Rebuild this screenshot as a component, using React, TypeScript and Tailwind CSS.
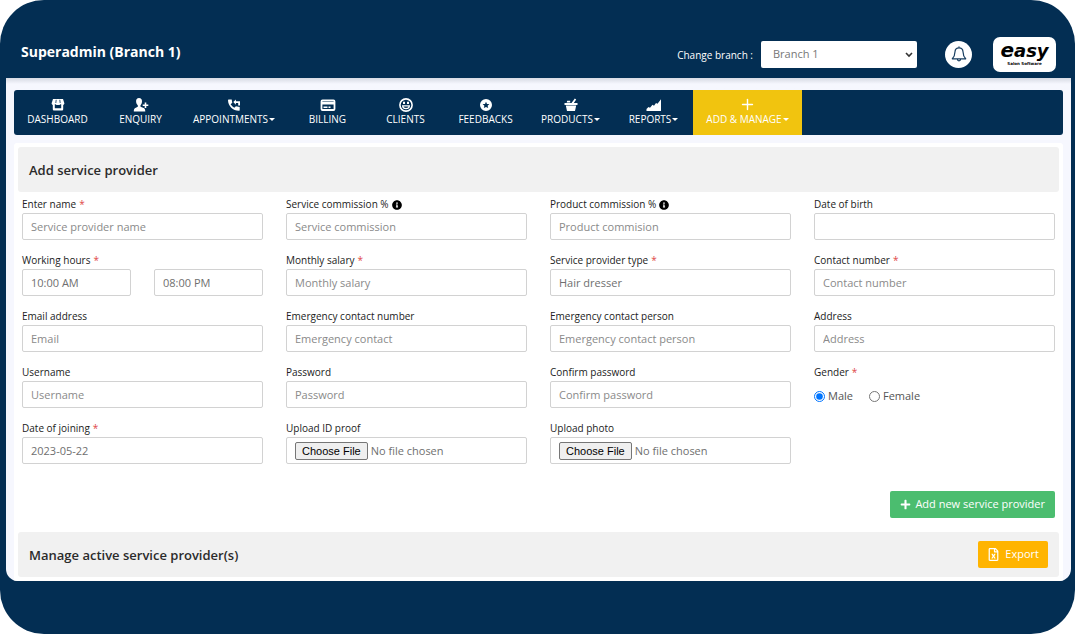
import type { ReactNode } from "react";
import { FaInfoCircle, FaPlus, FaRegFileExcel } from "react-icons/fa";
import { LuPlus } from "react-icons/lu";

type MenuEntry = { label: string; icon: ReactNode; menu?: boolean; active?: boolean; size: string };

const svgClass = "h-[14px] w-[16px]";

const StoreIcon = () => (
  <svg viewBox="0 0 16 14" className={svgClass} fill="currentColor" aria-hidden="true">
    <path d="M3 1h10l1.400 4.200c0 1.100-.8 1.900-1.900 1.900-.9 0-1.700-.5-2-1.200-.5.800-1.400 1.200-2.500 1.200s-2-.4-2.500-1.200c-.3.700-1.100 1.200-2 1.200-1.100 0-1.900-.8-1.900-1.900z" />
    <path d="M2.800 7h2v3.200h6.400V7h2v4.200c0 .8-.6 1.400-1.400 1.400H4.200c-.8 0-1.400-.6-1.400-1.400z" />
    <path d="M6.200 1.800 5.800 5M9.800 1.800l.4 3.200" stroke="#032e53" strokeWidth=".8" />
  </svg>
);

const PersonPlusIcon = () => (
  <svg viewBox="0 0 16 14" className={svgClass} fill="currentColor" aria-hidden="true">
    <path d="M6 0c2 0 3.200 1.500 3 3.500-.1 1.800-.7 3-1.500 3.800v1.400l3.200 1.300c1.200.5 1.500 1.500 1.600 3.500H.8c0-2 .4-3 1.500-3.500l2.500-1.300V7.300C3.800 6.500 3.200 5.200 3.100 3.500 3 1.500 4 0 6 0z" />
    <path d="M11.700 4.500h1.600v2h2v1.600h-2v2h-1.600v-2h-2V6.500h2z" />
  </svg>
);

const PhoneIcon = () => (
  <svg viewBox="0 0 16 14" className={svgClass} fill="currentColor" aria-hidden="true">
    <path d="M2.500 1.500h3.200l.6 3.300-1.700 1.500a10 10 0 0 0 3.700 3.400l1.600-1.500 3.800.8v2.900c0 .5-.4.900-.9.900C7 12.800 2 8 2 2z" />
    <path d="M7.300 4.100 9.900 1.500v1.700H14v-1.700h-2.200V1.500H14v6h-1.800V5H9.900v1.700z" />
  </svg>
);

const CardIcon = () => (
  <svg viewBox="0 0 16 14" className={svgClass} aria-hidden="true">
    <rect x="1.500" y="2.500" width="13" height="9.500" rx="1" fill="none" stroke="currentColor" strokeWidth="1.800" />
    <path d="M1 4h14v2.500H1zM3.500 8.500h4V10h-4zM8.500 8.500h2V10h-2z" fill="currentColor" />
  </svg>
);

const SmileIcon = () => (
  <svg viewBox="0 0 16 14" className={svgClass} fill="none" stroke="currentColor" aria-hidden="true">
    <circle cx="8" cy="7" r="6.100" strokeWidth="1.600" />
    <path d="M4.600 7.900h6.800c-.2 1.700-1.500 2.800-3.400 2.800s-3.200-1.100-3.400-2.800z" strokeWidth="1.200" />
    <path d="M5 6h2V3.800H5zM9 6h2V3.800H9z" fill="currentColor" stroke="none" />
  </svg>
);

const StarBadgeIcon = () => (
  <svg viewBox="0 0 16 14" className={svgClass} fill="currentColor" aria-hidden="true">
    <path fillRule="evenodd" d="M8 1a6 6 0 1 1 0 12A6 6 0 0 1 8 1zm0 2.700-1 2.200-2.400.2 1.800 1.600-.6 2.400L8 8.900l2.200 1.200-.6-2.400 1.800-1.600L9 5.900z" />
  </svg>
);

const BasketIcon = () => (
  <svg viewBox="0 0 16 14" className={svgClass} fill="currentColor" aria-hidden="true">
    <path d="M1.500 5h7l3.300-4.500 1.400 1L10.800 5h3.700v2.100h-13zM2.800 7.600h10.400L12 13H4zM4.200 2.800h3V4.500H3.700z" />
  </svg>
);

const ChartIcon = () => (
  <svg viewBox="0 0 16 14" className={svgClass} fill="currentColor" aria-hidden="true">
    <path d="M.5 13V11l2-2 1.500.8 2.500-3 1.500 1L10 5l1.500.8L15 1.200V13z" />
  </svg>
);

const BellIcon = () => (
  <svg viewBox="0 0 16 16" className="size-[16px]" fill="none" stroke="currentColor" strokeWidth="1.200" strokeLinejoin="round" strokeLinecap="round" aria-hidden="true">
    <path d="M8 .8v1M8 1.800c2.300 0 3.900 1.600 4 4 .1 3.600.8 5.200 2.700 7H1.300c1.900-1.800 2.600-3.400 2.700-7 .1-2.400 1.700-4 4-4zM6.300 13c.1 1.200.7 1.900 1.700 1.900s1.600-.7 1.700-1.900" />
  </svg>
);

const Caret = () => (
  <svg viewBox="0 0 6 3" className="h-[3px] w-[6px]" fill="currentColor" aria-hidden="true">
    <path d="M0 0h6L3 3z" />
  </svg>
);

const entries: MenuEntry[] = [
  { label: "DASHBOARD", icon: <StoreIcon />, size: "w-[87px]" },
  { label: "ENQUIRY", icon: <PersonPlusIcon />, size: "w-[79px]" },
  { label: "APPOINTMENTS", icon: <PhoneIcon />, menu: true, size: "w-[108px]" },
  { label: "BILLING", icon: <CardIcon />, size: "w-[79px]" },
  { label: "CLIENTS", icon: <SmileIcon />, size: "w-[77px]" },
  { label: "FEEDBACKS", icon: <StarBadgeIcon />, size: "w-[83px]" },
  { label: "PRODUCTS", icon: <BasketIcon />, menu: true, size: "w-[87px]" },
  { label: "REPORTS", icon: <ChartIcon />, menu: true, size: "w-[79px]" },
  { label: "ADD & MANAGE", icon: <LuPlus className="size-[17px]" />, menu: true, active: true, size: "w-[109px]" },
];

const labelClass = "flex h-[17px] items-center gap-[3px] text-[10px] text-[#222222]";
const inputClass =
  "block h-[27px] w-full min-w-0 rounded-[2px] border border-[#d2d2d2] bg-white px-[8px] text-[11px] text-[#6f6f6f] placeholder:text-[#8a8a8a] outline-none";

function FieldLabel({ id, text, required, info }: { id: string; text: string; required?: boolean; info?: boolean }) {
  return (
    <label htmlFor={id} className={labelClass}>
      {text}
      {required && <span className="text-[#e04848]">*</span>}
      {info && <FaInfoCircle className="size-[10px] text-black" />}
    </label>
  );
}

type FieldProps = { id: string; text: string; hint?: string; value?: string; required?: boolean; info?: boolean; type?: string };

function Field({ id, text, hint, value, required, info, type = "text" }: FieldProps) {
  return (
    <div className="min-w-0">
      <FieldLabel id={id} text={text} required={required} info={info} />
      <input id={id} type={type} placeholder={hint} defaultValue={value} className={inputClass} />
    </div>
  );
}

function FileField({ id, text }: { id: string; text: string }) {
  return (
    <div className="min-w-0">
      <FieldLabel id={id} text={text} />
      <input
        id={id}
        type="file"
        className="block h-[27px] w-full rounded-[2px] border border-[#d2d2d2] px-[8px] pt-[4px] text-[11px] leading-[18px] text-[#6f6f6f] file:mr-[3px] file:h-[18px] file:rounded-[2px] file:border file:border-solid file:border-[#767676] file:bg-[#efefef] file:px-[6px] file:font-['Liberation_Sans',sans-serif] file:text-[11px] file:leading-[14px] file:text-black"
      />
    </div>
  );
}

export default function App() {
  return (
    <div className="min-h-screen rounded-[44px] bg-[#032e53] pr-[4px] pb-[53px] pl-[6px] font-['Open_Sans',sans-serif]">
      <header className="flex h-[78px] items-center pt-[30px] pr-[15px] pl-[15px] text-white">
        <h1 className="pb-[6px] text-[14px] font-bold">Superadmin (Branch 1)</h1>
        <div className="ml-auto flex items-center">
          <label htmlFor="branch" className="mr-[8px] pt-[3px] text-[10px] font-medium">Change branch :</label>
          <div className="relative">
            <select id="branch" className="block h-[27px] w-[156px] appearance-none rounded-[2px] bg-white px-[12px] text-[11px] text-[#777777]">
              <option>Branch 1</option>
            </select>
            <svg viewBox="0 0 8 6" className="pointer-events-none absolute top-[11px] right-[4px] h-[6px] w-[8px]" fill="none" stroke="#333333" strokeWidth="1.600" aria-hidden="true">
              <path d="M1 1l3 3 3-3" />
            </svg>
          </div>
          <button aria-label="Notifications" className="ml-[28px] flex size-[27px] items-center justify-center rounded-full bg-white text-[#173d5f]">
            <BellIcon />
          </button>
          <a href="#" className="ml-[21px] flex h-[35px] w-[63px] flex-col items-center justify-center rounded-[7px] bg-white pb-[2px] font-['DejaVu_Sans',sans-serif] text-black">
            <span className="text-[18px] leading-[21px] font-bold italic">
              <span className="text-[20px]">e</span>asy
            </span>
            <span className="text-[4px] leading-[5px] font-bold">Salon Software</span>
          </a>
        </div>
      </header>

      <div className="overflow-hidden rounded-b-[12px] bg-[#f6f7fe]">
        <div className="h-[12px] bg-linear-to-b from-[#d7dae3] to-[#f6f7fe] to-50%" />
        <nav className="mx-[8px] flex h-[45px] overflow-hidden rounded-[3px] bg-[#032e53]">
          {entries.map((entry) => (
            <a
              key={entry.label}
              href="#"
              className={`flex ${entry.size} flex-col items-center pt-[7px] text-[10px] text-white ${entry.active ? "bg-[#f1c40f]" : ""}`}
            >
              <span className="flex h-[15px] items-center">{entry.icon}</span>
              <span className="flex items-center gap-px leading-[15px] whitespace-nowrap">
                {entry.label}
                {entry.menu && <Caret />}
              </span>
            </a>
          ))}
        </nav>

        <main className="mx-[8px] mt-[8px] rounded-t-[3px] bg-white px-[4px] py-[4px]">
          <h2 className="flex h-[45px] items-center rounded-[3px] bg-[#f1f1f1] px-[11px] pt-[2px] text-[13px] font-semibold text-[#2b2b2b]">
            Add service provider
          </h2>
          <form className="px-[4px] pt-[4px]">
            <div className="grid grid-cols-4 gap-x-[23px] gap-y-[12px]">
              <Field id="name" text="Enter name" hint="Service provider name" required />
              <Field id="service-commission" text="Service commission %" hint="Service commission" info />
              <Field id="product-commission" text="Product commission %" hint="Product commision" info />
              <Field id="birth" text="Date of birth" />
              <div>
                <FieldLabel id="from" text="Working hours" required />
                <div className="grid grid-cols-2 gap-[23px]">
                  <input id="from" defaultValue="10:00 AM" className={inputClass} />
                  <input aria-label="Working hours end" defaultValue="08:00 PM" className={inputClass} />
                </div>
              </div>
              <Field id="salary" text="Monthly salary" hint="Monthly salary" required />
              <Field id="type" text="Service provider type" value="Hair dresser" required />
              <Field id="contact" text="Contact number" hint="Contact number" required />
              <Field id="email" text="Email address" hint="Email" type="email" />
              <Field id="emergency-number" text="Emergency contact number" hint="Emergency contact" />
              <Field id="emergency-person" text="Emergency contact person" hint="Emergency contact person" />
              <Field id="address" text="Address" hint="Address" />
              <Field id="username" text="Username" hint="Username" />
              <Field id="password" text="Password" hint="Password" type="password" />
              <Field id="confirm" text="Confirm password" hint="Confirm password" type="password" />
              <fieldset>
                <legend className={labelClass}>
                  Gender<span className="text-[#e04848]">*</span>
                </legend>
                <div className="flex h-[27px] items-center gap-[16px] pt-[4px] text-[11px] text-[#555555]">
                  <label className="flex items-center gap-[3px]">
                    <input type="radio" name="gender" defaultChecked className="size-[11px]" />
                    Male
                  </label>
                  <label className="flex items-center gap-[3px]">
                    <input type="radio" name="gender" className="size-[11px]" />
                    Female
                  </label>
                </div>
              </fieldset>
              <Field id="joining" text="Date of joining" value="2023-05-22" required />
              <FileField id="proof" text="Upload ID proof" />
              <FileField id="photo" text="Upload photo" />
            </div>
            <div className="mt-[27px] flex justify-end">
              <button type="button" className="flex h-[27px] items-center gap-[4px] rounded-[2px] bg-[#4bbd6f] px-[10px] text-[11px] text-white">
                <FaPlus className="size-[11px]" />
                Add new service provider
              </button>
            </div>
          </form>
          <section className="mt-[14px] flex h-[45px] items-center justify-between rounded-[3px] bg-[#f1f1f1] px-[11px]">
            <h2 className="pt-[2px] text-[13px] font-semibold text-[#2b2b2b]">Manage active service provider(s)</h2>
            <button type="button" className="flex h-[27px] items-center gap-[5px] rounded-[2px] bg-[#ffb400] px-[9px] text-[11px] text-white">
              <FaRegFileExcel className="size-[13px]" />
              Export
            </button>
          </section>
        </main>
      </div>
    </div>
  );
}
